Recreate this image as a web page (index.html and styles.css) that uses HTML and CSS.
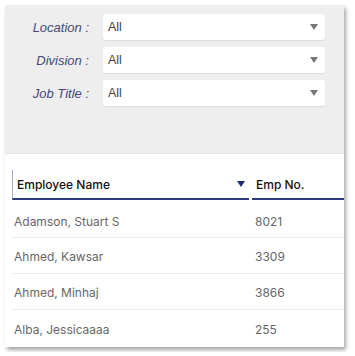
FILE: index.html
```html
<!DOCTYPE html>
<html>
<head lang="en">
    <meta charset="UTF-8">
    <title>Employees</title>
    <link rel="stylesheet" href="styles.css">
</head>
<body>
<div class="card">
    <div class="filters">
        <div class="filter">
            <label>Location :</label>
            <div class="select"><span>All</span><em></em></div>
        </div>
        <div class="filter">
            <label>Division :</label>
            <div class="select"><span>All</span><em></em></div>
        </div>
        <div class="filter">
            <label>Job Title :</label>
            <div class="select"><span>All</span><em></em></div>
        </div>
    </div>
    <div class="grid">
        <div class="head">
            <div class="th name">Employee Name<i class="sort"></i></div>
            <div class="th num">Emp No.</div>
        </div>
        <div class="row"><span class="name">Adamson, Stuart S</span><span class="num">8021</span></div>
        <div class="row"><span class="name">Ahmed, Kawsar</span><span class="num">3309</span></div>
        <div class="row"><span class="name">Ahmed, Minhaj</span><span class="num">3866</span></div>
        <div class="row"><span class="name">Alba, Jessicaaaa</span><span class="num">255</span></div>
    </div>
</div>
</body>
</html>
```

FILE: styles.css
```css
body {
    margin: 0;
    background: #fff;
}

.card {
    margin: 5px;
    width: 339px;
    height: 342px;
    overflow: hidden;
    background: #fff;
    box-shadow: 2px 3px 4px rgba(0, 0, 0, .35);
}

/* filter panel */
.filters {
    display: flex;
    flex-direction: column;
    gap: 7px;
    height: 139px;
    padding-top: 9px;
    background: #eeeeee;
    border-bottom: 1px solid #e2e2e2;
}

.filter {
    display: flex;
    align-items: center;
    gap: 14px;
}

.filter label {
    width: 84px;
    text-align: right;
    font: italic 13px "Liberation Sans", Arial, sans-serif;
    color: #434a78;
}

.select {
    display: flex;
    align-items: center;
    justify-content: space-between;
    width: 222px;
    height: 26px;
    padding: 0 6px 0 5px;
    box-sizing: border-box;
    background: #fff;
    border-radius: 3px;
    box-shadow: 0 1px 1px rgba(0, 0, 0, .08);
    font: 12.5px "Liberation Sans", Arial, sans-serif;
    color: #444;
}

.select em {
    width: 0;
    height: 0;
    margin-right: 1px;
    border-left: 4px solid transparent;
    border-right: 4px solid transparent;
    border-top: 6px solid #777;
}

/* table */
.grid {
    padding: 16px 0 0 7px;
    font-family: Inter, "Noto Sans", sans-serif;
}

.head {
    display: flex;
    gap: 3px;
    height: 30px;
}

.th {
    display: flex;
    align-items: center;
    box-sizing: border-box;
    border-bottom: 2px solid #2c3b7c;
    font-size: 12px;
    font-weight: 500;
    color: #111;
}

.th.name {
    justify-content: space-between;
    width: 237px;
    padding-left: 4px;
    padding-right: 4px;
    border-left: 1px solid #a9acc4;
}

.th.num {
    flex: 1;
    padding-left: 4px;
}

.sort {
    width: 0;
    height: 0;
    border-left: 4px solid transparent;
    border-right: 4px solid transparent;
    border-top: 6px solid #1e2d6e;
}

.row {
    display: flex;
    align-items: center;
    height: 36px;
    padding-top: 2px;
    box-sizing: border-box;
    border-bottom: 1px solid #ececec;
    font-size: 12px;
    color: #666;
}

.head + .row {
    height: 38px;
    padding-top: 6px;
}

.row:last-child {
    border-bottom: 0;
}

.row .name {
    width: 241px;
    padding-left: 2px;
}
```
